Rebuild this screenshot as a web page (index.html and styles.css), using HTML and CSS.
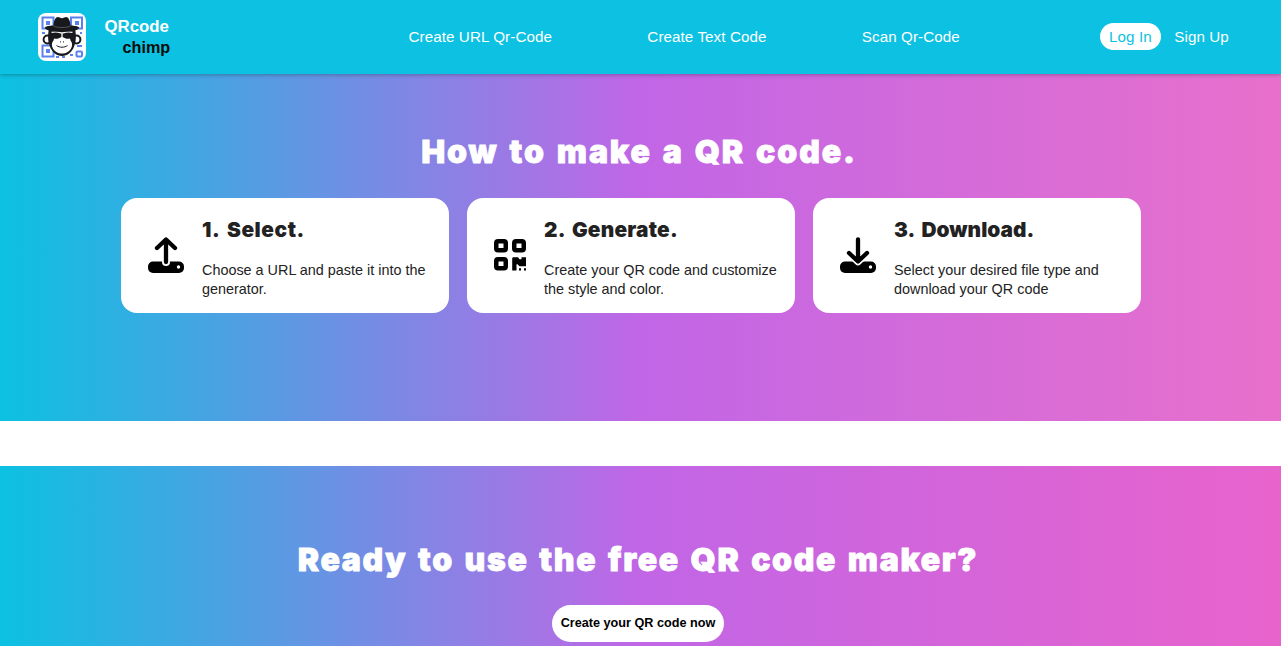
FILE: index.html
```html
<!DOCTYPE html>
<html lang="en">
<head>
<meta charset="utf-8">
<title>QRcode chimp</title>
<link rel="stylesheet" href="styles.css">
</head>
<body>
<header class="header">
  <a class="brand">
    <svg class="brand-logo" viewBox="0 0 48 48">
      <rect width="48" height="48" rx="8" fill="#fff"/>
      <g fill="none" stroke="#5b80f0" stroke-width="2">
        <rect x="4.500" y="4.500" width="11" height="11"/>
        <rect x="33" y="4.500" width="11" height="11"/>
        <rect x="4.500" y="32.500" width="11" height="11"/>
        <rect x="38.500" y="38.500" width="5.500" height="5" rx="1"/>
        <path d="M4 20h3M42 20h2M39 33h5M18 44h3M24 44h3M32 42h3"/>
      </g>
      <path fill="#5b80f0" d="M8 8h4v4H8zM37 8h4v4h-4zM8 36h4v4H8z"/>
      <circle cx="9.500" cy="26.500" r="3.900" fill="#fff" stroke="#17191d" stroke-width="2"/>
      <circle cx="38.500" cy="26.500" r="3.900" fill="#fff" stroke="#17191d" stroke-width="2"/>
      <path fill="#17191d" d="M11 16h26c1.500 6 1 13-.7 17-2 6-6.800 10-12.300 10S13.700 39 11.700 33c-1.700-4-2.200-11-.7-17z"/>
      <path fill="#fff" d="M16 25.500c3 1 5-.5 8-1.500 3 1 5 2.500 8 1.500l.5 2c2 2 2 5 .8 7.500-1.600 3.500-5.300 5.500-9.300 5.500s-7.700-2-9.300-5.500c-1.200-2.500-1.200-5.500.8-7.500z"/>
      <path fill="none" stroke="#fff" stroke-width="1.300" d="M13.500 19.300c3.500-.7 7-.3 9.300.5h2.400c2.300-.8 5.800-1.200 9.300-.5M24 20v6"/>
      <path fill="none" stroke="#17191d" stroke-width="1" d="M18.500 32.500c3 2.300 8 2.300 11 0M22 28.500l1 .8M26 28.500l-1 .8"/>
      <path fill="#17191d" d="M15.500 12.500C15.800 7 17.800 4 19.800 4c1.500 0 2.700 1.200 4.200 1.200S26.700 4 28.200 4c2 0 4 3 4.300 8.500 4.500.2 8 .8 8.500 2 .5 2.200-5 4.300-17 4.300S6.500 16.700 7 14.500c.5-1.200 4-1.800 8.500-2z"/>
      <path fill="none" stroke="#777d84" stroke-width=".6" d="M15.500 13c4 2 13 2 17 0"/>
    </svg>
    <span class="brand-name"><span class="brand-top">QRcode</span><span class="brand-bottom">chimp</span></span>
  </a>
  <nav class="nav">
    <a>Create URL Qr-Code</a>
    <a>Create Text Code</a>
    <a>Scan Qr-Code</a>
  </nav>
  <div class="account">
    <a class="login">Log In</a>
    <a>Sign Up</a>
  </div>
</header>
<main>
  <section class="steps">
    <h1 class="heading heading-steps">How to make a QR code.</h1>
    <div class="cards">
      <article class="card">
        <svg class="icon" width="36" height="36" viewBox="0 0 36 36">
          <rect y="24.500" width="36" height="11.500" rx="5"/>
          <path d="M18 20v5" stroke="#fff" stroke-width="8" stroke-linecap="round"/>
          <path d="M18 25V3M9 11l9-8.500 9 8.500" fill="none" stroke="#000" stroke-width="4.300" stroke-linecap="round" stroke-linejoin="round"/>
          <circle cx="30.500" cy="30" r="1.700" fill="#fff"/>
        </svg>
        <div class="card-body">
          <h2 class="card-title select">1. Select.</h2>
          <p class="card-text">Choose a URL and paste it into the<br>generator.</p>
        </div>
      </article>
      <article class="card">
        <svg class="icon" width="32" height="32" viewBox="0 0 32 32">
          <g fill="none" stroke="#000" stroke-width="4.500">
            <rect x="2.250" y="2.250" width="9.500" height="9" rx="1.800"/>
            <rect x="20.250" y="2.250" width="9.500" height="9" rx="1.800"/>
            <rect x="2.250" y="20.250" width="9.500" height="9" rx="1.800"/>
          </g>
          <path d="M19.500 18.200H24l1.500 2h2v-2H32v9h-6.500l-2-2h-1v6.300h-4.300V19.500q0-1.300 1.300-1.300zM25 29.300h2v2.200h-2zM30 29.300h2v2.200h-2z"/>
        </svg>
        <div class="card-body">
          <h2 class="card-title generate">2. Generate.</h2>
          <p class="card-text">Create your QR code and customize<br>the style and color.</p>
        </div>
      </article>
      <article class="card">
        <svg class="icon" width="36" height="36" viewBox="0 0 36 36">
          <rect y="24.500" width="36" height="11.500" rx="5"/>
          <path d="M9 16l9 8.500 9-8.500" fill="none" stroke="#fff" stroke-width="7.500" stroke-linejoin="round"/>
          <path d="M18 2.500v21M9 16l9 8.500 9-8.500" fill="none" stroke="#000" stroke-width="4.300" stroke-linecap="round" stroke-linejoin="round"/>
          <circle cx="30.500" cy="30" r="1.700" fill="#fff"/>
        </svg>
        <div class="card-body">
          <h2 class="card-title download">3. Download.</h2>
          <p class="card-text">Select your desired file type and<br>download your QR code</p>
        </div>
      </article>
    </div>
  </section>
  <section class="ready">
    <h2 class="heading heading-ready">Ready to use the free QR code maker?</h2>
    <a class="cta">Create your QR code now</a>
  </section>
</main>
</body>
</html>
```
FILE: styles.css
```css
* { box-sizing: border-box; }
body { margin: 0; height: 646px; overflow: hidden; background: #fff; color: #222; font-family: "Liberation Sans", Arial, sans-serif; }
h1, h2, p { margin: 0; }
a { white-space: nowrap; }
.header { position: relative; display: grid; grid-template-columns: 370.5px 691.5px 1fr; align-items: center; height: 74px; padding-left: 38px; background: #0cc1e1; color: #fff; font-size: 15.2px; letter-spacing: .08px; box-shadow: 0 1px 4px rgba(0, 0, 0, .28); }
.brand { display: flex; align-items: center; gap: 18.500px; letter-spacing: 0; }
.brand-logo { width: 48px; height: 48px; }
.brand-name { display: flex; flex-direction: column; font-weight: 700; line-height: 20px; }
.brand-top { font-size: 16.8px; }
.brand-bottom { padding-left: 18px; font-size: 16.2px; color: #0b0b0b; }
.nav { display: flex; gap: 95.3px; padding-bottom: 2px; }
.account { display: flex; align-items: center; gap: 13.5px; padding-bottom: 2px; }
.login { padding: 5px 9px; border-radius: 14px; background: #fff; color: #0cc1e1; line-height: 17px; }
.steps { height: 347px; padding-top: 56px; background: linear-gradient(90deg, #0cc1e1 0%, #c166e6 50%, #e870cc 100%); }
.heading { color: #fff; font-family: Inter, "Liberation Sans", sans-serif; font-weight: 900; font-size: 32px; line-height: 44px; text-align: center; white-space: nowrap; -webkit-text-stroke: .8px #fff; }
.heading-steps { padding-right: 3px; letter-spacing: 1.9px; word-spacing: 2.7px; }
.cards { display: flex; gap: 18px; margin: 24px 0 0 121px; }
.card { display: flex; align-items: center; gap: 18px; width: 328px; height: 115px; padding: 0 0 2px 27px; border-radius: 16px; background: #fff; }
.icon { flex: none; }
.card-body { padding-top: 6px; }
.card-title { font-family: Inter, "Liberation Sans", sans-serif; font-weight: 900; font-size: 20.8px; line-height: 28px; word-spacing: 3px; white-space: nowrap; }
.select { letter-spacing: .6px; }
.generate { letter-spacing: .25px; }
.download { letter-spacing: .05px; }
.card-text { margin-top: 17px; font-size: 14.4px; line-height: 19px; white-space: nowrap; }
.ready { display: flex; flex-direction: column; align-items: center; height: 180px; margin-top: 45px; padding: 72px 5px 0 0; background: linear-gradient(90deg, #0cc1e1 0%, #c166e6 50%, #e863cc 100%); }
.heading-ready { letter-spacing: 1.65px; word-spacing: 2.7px; }
.cta { margin-top: 23px; height: 37px; padding: 0 8.500px; border-radius: 19px; background: #fff; color: #000; font-size: 12.65px; font-weight: 700; line-height: 36px; }
```
